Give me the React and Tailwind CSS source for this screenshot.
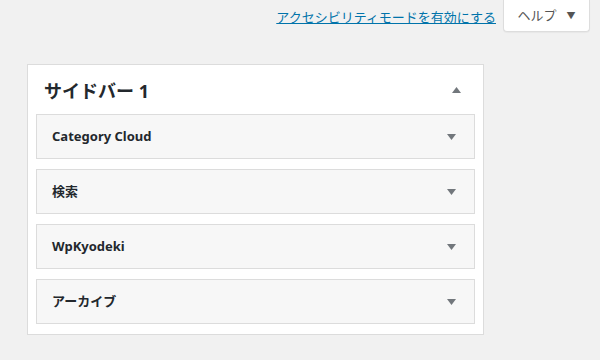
import React from 'react'

const Arrow = ({ up }) => (
    <svg width="9" height="6" viewBox="0 0 9 6" className="shrink-0">
        {up
            ? <polygon points="0,6 9,6 4.5,0" fill="#72777c" />
            : <polygon points="0,0 9,0 4.5,6" fill="#72777c" />}
    </svg>
)

const widgets = ["Category Cloud", "検索", "WpKyodeki", "アーカイブ"]

const App = () => {
    return (
        <div className="w-[600px] h-[360px] bg-[#f1f1f1] text-[#23282d] overflow-hidden font-['Noto_Sans','Noto_Sans_CJK_JP',sans-serif]">
            <div className="flex justify-end items-start h-[32px] pr-[10px]">
                <a className="mt-[8px] mr-[7px] text-[13px] leading-[18px] text-[#0073aa] underline">
                    アクセシビリティモードを有効にする
                </a>
                <button className="w-[87px] h-[32px] bg-white border border-t-0 border-[#ddd] rounded-b-[4px] shadow-[0_1px_1px_rgba(0,0,0,0.04)] flex items-center justify-center gap-[10px] text-[13px] text-[#555]">
                    <span>ヘルプ</span>
                    <span className="text-[9px] text-[#555]">▼</span>
                </button>
            </div>
            <div className="mt-[32px] ml-[27px] w-[457px] bg-white border border-[#dcdcdc] px-[8px] pb-[10px]">
                <div className="h-[49px] flex items-center justify-between pl-[8px] pr-[14px]">
                    <h2 className="text-[18px] font-bold text-[#23282d] pt-[4px]">サイドバー 1</h2>
                    <Arrow up />
                </div>
                <div className="flex flex-col gap-[10px]">
                    {widgets.map((w) => (
                        <div key={w} className="h-[45px] bg-[#f7f7f7] border border-[#dcdcdc] flex items-center justify-between pl-[15px] pr-[18px]">
                            <span className="text-[13px] font-bold text-[#23282d]">{w}</span>
                            <Arrow />
                        </div>
                    ))}
                </div>
            </div>
        </div>
    )
}

export default App
